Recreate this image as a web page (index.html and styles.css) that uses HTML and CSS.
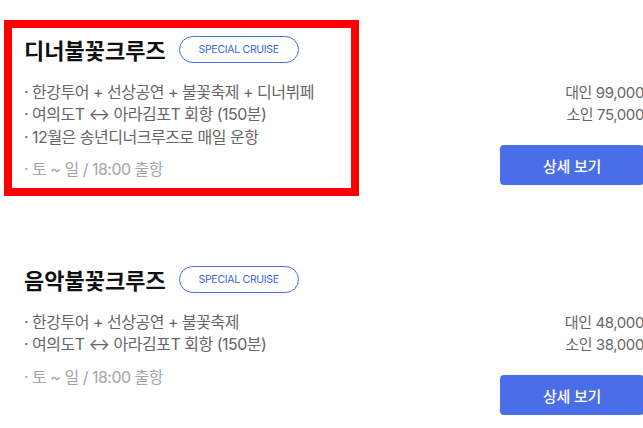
FILE: index.html
```html
<!DOCTYPE html>
<html lang="ko">
<head>
<meta charset="utf-8">
<link rel="stylesheet" href="styles.css">
</head>
<body>
<div class="page">
  <div class="card first">
    <div class="info highlight">
      <div class="title-row">
        <h2 class="title">디너불꽃크루즈</h2>
        <span class="badge">SPECIAL CRUISE</span>
      </div>
      <ul class="features">
        <li>· 한강투어 + 선상공연 + 불꽃축제 + 디너뷔페</li>
        <li>· 여의도T ↔ 아라김포T 회항 (150분)</li>
        <li>· 12월은 송년디너크루즈로 매일 운항</li>
      </ul>
      <p class="schedule">· 토 ~ 일 / 18:00 출항</p>
    </div>
    <div class="side">
      <div class="prices">
        <p>대인 99,000</p>
        <p>소인 75,000</p>
      </div>
      <button class="detail">상세 보기</button>
    </div>
  </div>
  <div class="card">
    <div class="info">
      <div class="title-row">
        <h2 class="title">음악불꽃크루즈</h2>
        <span class="badge">SPECIAL CRUISE</span>
      </div>
      <ul class="features">
        <li>· 한강투어 + 선상공연 + 불꽃축제</li>
        <li>· 여의도T ↔ 아라김포T 회항 (150분)</li>
      </ul>
      <p class="schedule">· 토 ~ 일 / 18:00 출항</p>
    </div>
    <div class="side">
      <div class="prices">
        <p>대인 48,000</p>
        <p>소인 38,000</p>
      </div>
      <button class="detail">상세 보기</button>
    </div>
  </div>
</div>
</body>
</html>
```
FILE: styles.css
```css
html, body {
  margin: 0;
  padding: 0;
  background: #fff;
  overflow: hidden;
}
body {
  font-family: Inter, "Noto Sans CJK KR", sans-serif;
  width: 643px;
  height: 428px;
}
.page {
  width: 644px;
  padding-top: 20px;
  display: flex;
  flex-direction: column;
  gap: 54px;
}
.card {
  display: flex;
  justify-content: space-between;
  align-items: flex-start;
}
.info {
  margin-left: 4px;
  width: 327px;
  height: 152px;
  border: 8px solid transparent;
  padding: 8px 0 0 12px;
  box-sizing: content-box;
}
.info.highlight {
  border-color: #ff0000;
}
.title-row {
  display: flex;
  align-items: center;
  gap: 13px;
  height: 27px;
}
.title {
  margin: 0;
  font-family: "Noto Sans CJK KR", sans-serif;
  font-size: 22px;
  font-weight: 700;
  color: #111;
  letter-spacing: 0;
  line-height: 27px;
}
.badge {
  box-sizing: border-box;
  width: 120px;
  height: 27px;
  border: 1px solid #4a6ee8;
  border-radius: 14px;
  color: #4463e6;
  font-size: 10.5px;
  letter-spacing: -0.3px;
  display: flex;
  align-items: center;
  justify-content: center;
}
.features {
  list-style: none;
  margin: 18px 0 0;
  padding: 0;
  color: #666;
  font-size: 16px;
  line-height: 22.4px;
  letter-spacing: -0.5px;
}
.schedule {
  margin: 10px 0 0;
  color: #a5a5a5;
  font-size: 16px;
  line-height: 22.4px;
  letter-spacing: -0.5px;
}
.side {
  width: 144px;
  padding-top: 62px;
  display: flex;
  flex-direction: column;
  align-items: flex-end;
}
.prices {
  text-align: right;
  color: #666;
  font-size: 15px;
  line-height: 22px;
  letter-spacing: -0.4px;
}
.prices p {
  margin: 0;
}
.detail {
  margin-top: 19px;
  width: 144px;
  height: 40px;
  border: none;
  border-radius: 4px;
  background: #4a6ee8;
  color: #fff;
  font-family: "Noto Sans CJK KR", sans-serif;
  font-size: 15px;
  font-weight: 500;
  letter-spacing: -0.3px;
}
```
